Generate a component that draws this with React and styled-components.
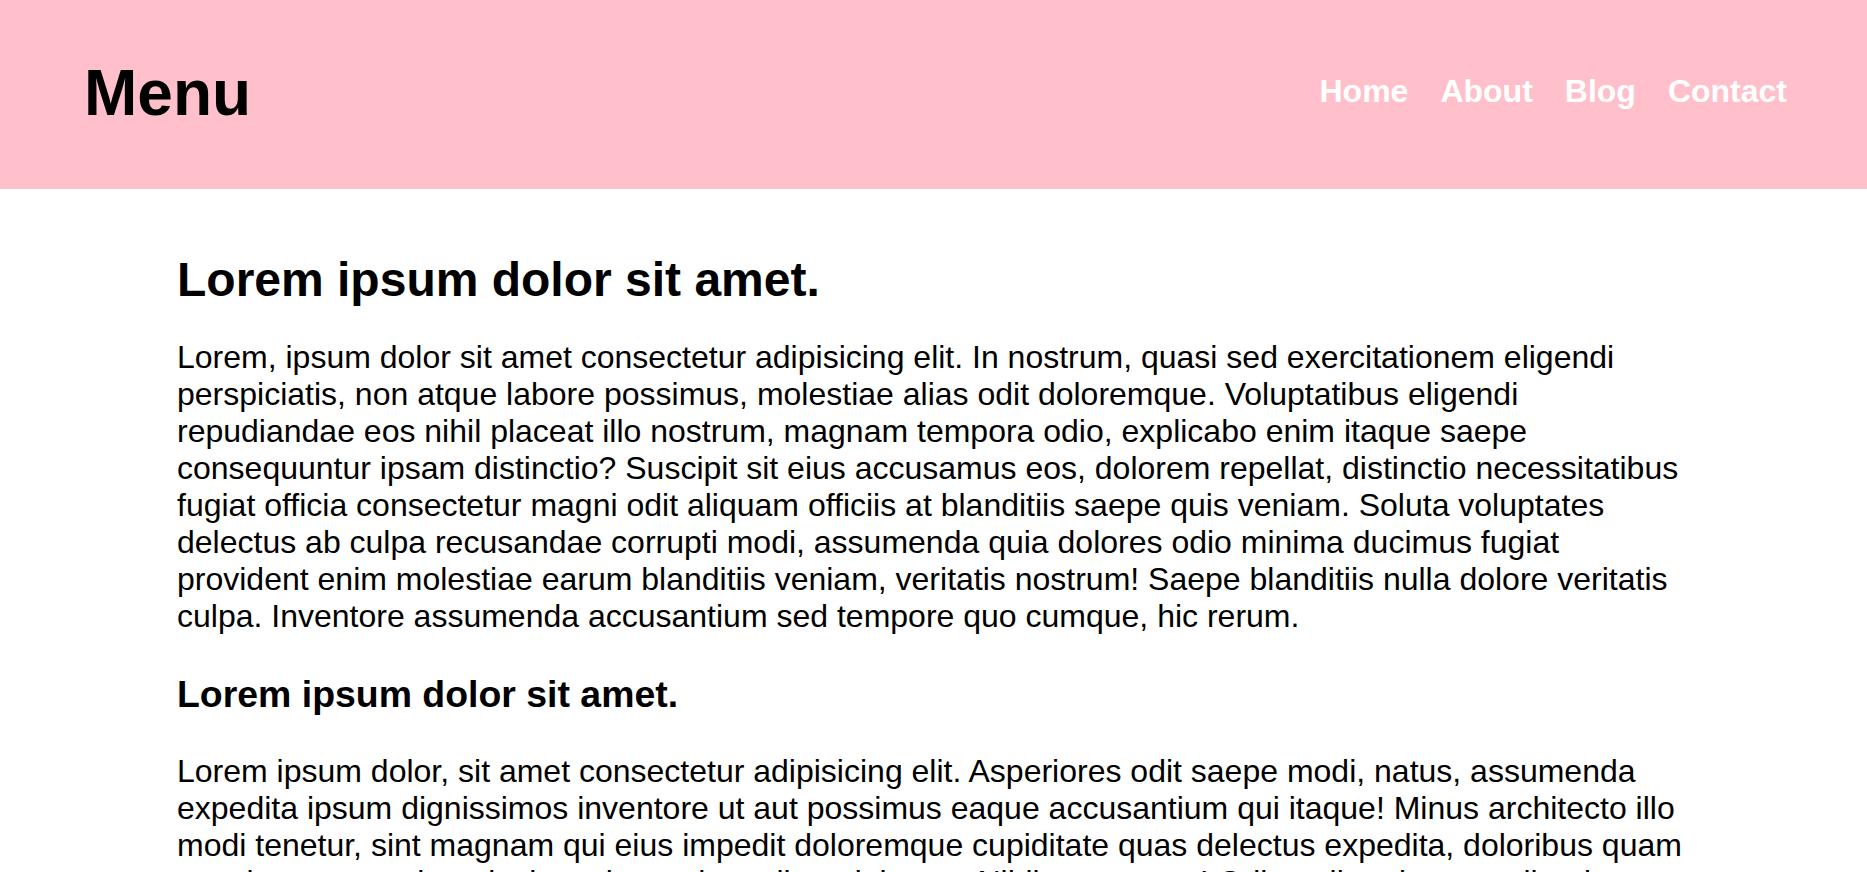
import React from "react";
import styled, { createGlobalStyle } from "styled-components";

const GlobalStyle = createGlobalStyle`
  html, body {
    margin: 0;
    padding: 0;
    background: #ffffff;
  }
  body {
    font-family: "Liberation Sans", Arial, sans-serif;
    font-size: 32px;
    color: #000000;
  }
`;

const Header = styled.header`
  height: 189px;
  background: #ffc0cb;
  display: flex;
  align-items: center;
  justify-content: space-between;
  padding: 0 80px 0 84px;
  box-sizing: border-box;
`;

const Logo = styled.h1`
  margin: 0 0 3px;
  font-size: 64px;
  font-weight: 700;
`;

const Nav = styled.nav`
  display: flex;
  gap: 32px;
  margin-bottom: 6px;
`;

const NavLink = styled.a`
  color: #ffffff;
  font-size: 32px;
  font-weight: 700;
  text-decoration: none;
`;

const Main = styled.main`
  padding: 31px 177px 0;
`;

const Title = styled.h1`
  font-size: 48px;
  font-weight: 700;
  margin: 0.67em 0;
`;

const Subtitle = styled.h3`
  font-size: 37.44px;
  font-weight: 700;
  margin: 1em 0;
`;

const Paragraph = styled.p`
  margin: 1em 0;
  font-size: 32px;
`;

export default function App() {
  return (
    <>
      <GlobalStyle />
      <Header>
        <Logo>Menu</Logo>
        <Nav>
          <NavLink href="#">Home</NavLink>
          <NavLink href="#">About</NavLink>
          <NavLink href="#">Blog</NavLink>
          <NavLink href="#">Contact</NavLink>
        </Nav>
      </Header>
      <Main>
        <Title>Lorem ipsum dolor sit amet.</Title>
        <Paragraph>
          Lorem, ipsum dolor sit amet consectetur adipisicing elit. In nostrum, quasi sed exercitationem eligendi
          perspiciatis, non atque labore possimus, molestiae alias odit doloremque. Voluptatibus eligendi
          repudiandae eos nihil placeat illo nostrum, magnam tempora odio, explicabo enim itaque saepe
          consequuntur ipsam distinctio? Suscipit sit eius accusamus eos, dolorem repellat, distinctio necessitatibus
          fugiat officia consectetur magni odit aliquam officiis at blanditiis saepe quis veniam. Soluta voluptates
          delectus ab culpa recusandae corrupti modi, assumenda quia dolores odio minima ducimus fugiat
          provident enim molestiae earum blanditiis veniam, veritatis nostrum! Saepe blanditiis nulla dolore veritatis
          culpa. Inventore assumenda accusantium sed tempore quo cumque, hic rerum.
        </Paragraph>
        <Subtitle>Lorem ipsum dolor sit amet.</Subtitle>
        <Paragraph>
          Lorem ipsum dolor, sit amet consectetur adipisicing elit. Asperiores odit saepe modi, natus, assumenda
          expedita ipsum dignissimos inventore ut aut possimus eaque accusantium qui itaque! Minus architecto illo
          modi tenetur, sint magnam qui eius impedit doloremque cupiditate quas delectus expedita, doloribus quam
          eveniet accusantium ducimus iste voluptatibus dolorem. Nihil, numquam! Odit, quibusdam repellendus.
        </Paragraph>
      </Main>
    </>
  );
}
